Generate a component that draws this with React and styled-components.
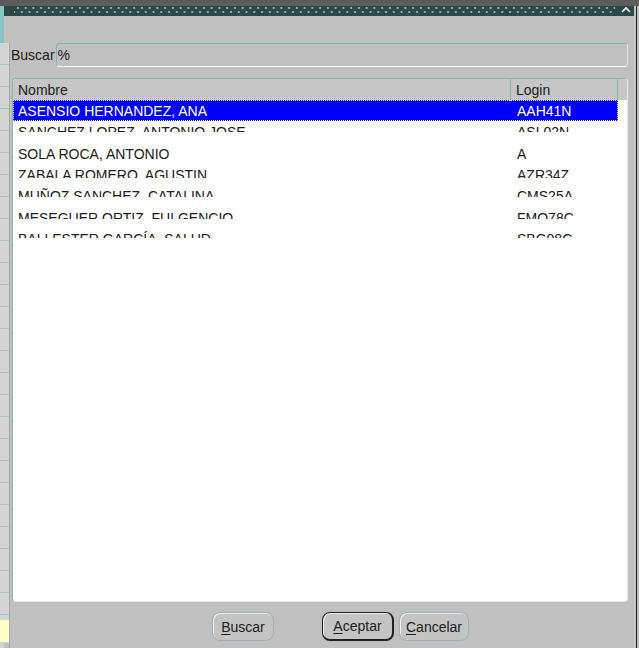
import React from "react";
import styled, { createGlobalStyle } from "styled-components";

const GlobalStyle = createGlobalStyle`
  html, body {
    margin: 0;
    padding: 0;
  }
  body {
    background: #5c5c5c;
    font-family: "Liberation Sans", Arial, sans-serif;
  }
`;

const teal = "#80b8b8";

const Desktop = styled.div`
  width: 639px;
  height: 648px;
  overflow: hidden;
  display: grid;
  grid-template-columns: 4px 630px 5px;
  grid-template-rows: 6px 10px 632px;
  background: #c0c0c0;
`;

const TopBand = styled.div`
  grid-column: 1 / 4;
  grid-row: 1;
  background: #5c5c5c;
`;

const Side = styled.div`
  grid-column: 1;
  grid-row: 2 / 4;
  background:
    linear-gradient(#ffffc8, #ffffc8) 0 614px / 100% 22px no-repeat,
    linear-gradient(#88c4c4, #88c4c4) 0 0 / 100% 37px no-repeat,
    repeating-linear-gradient(to bottom, #d4d4d4 0 21px, #a0c8c8 21px 22px) 0 37px / 100% 600px no-repeat,
    #d4d4d4;
`;

const TitleBar = styled.div`
  grid-column: 2;
  grid-row: 2;
  display: flex;
  align-items: center;
  background: #2d4848;
  padding-right: 3px;
`;

const Dots = styled.div`
  flex: 1;
  align-self: stretch;
  margin-left: 10px;
  margin-right: 6px;
  background:
    radial-gradient(circle at 4px 1.8px, #7ab4b4 0 0.9px, transparent 1.3px) 0 0 / 7.75px 4px repeat-x,
    radial-gradient(circle at 4px 1.8px, #7ab4b4 0 0.9px, transparent 1.3px) 3.9px 4px / 7.75px 4px repeat-x;
`;

const Chevron = styled.svg`
  display: block;
  width: 10px;
  height: 8px;
  margin-top: -2px;
`;

const RightEdge = styled.div`
  grid-column: 3;
  grid-row: 2 / 4;
  background: linear-gradient(to right, #c8c8c8 0 1px, #c0c0c0 1px 2px, #202020 2px 3px, #c0c0c0 3px);
`;

const Body = styled.div`
  grid-column: 2;
  grid-row: 3;
  min-width: 0;
  display: flex;
  flex-direction: column;
  padding: 27px 6px 0 7px;
  background:
    linear-gradient(#ffffc8, #ffffc8) 0 604px / 5px 22px no-repeat,
    linear-gradient(#a8a8a8, #a8a8a8) 5px 27px / 1px 100% no-repeat,
    repeating-linear-gradient(to bottom, #d4d4d4 0 21px, #a0c8c8 21px 22px) 0 27px / 5px 600px no-repeat,
    #c0c0c0;
`;

const SearchRow = styled.div`
  display: flex;
  align-items: center;
  height: 24px;
`;

const Label = styled.label`
  font-size: 14px;
  color: #202020;
  margin-right: 1px;
`;

const Field = styled.div`
  flex: 1;
  box-sizing: border-box;
  height: 24px;
  border: 1px solid ${teal};
  border-right-color: #e4e4e4;
  border-bottom-color: #ffffff;
  border-radius: 4px;
  font-size: 14px;
  line-height: 22px;
  padding-left: 1px;
  color: #202020;
`;

const ListBox = styled.div`
  margin-top: 11px;
  margin-left: 1px;
  height: 524px;
  box-sizing: border-box;
  border: 1px solid ${teal};
  border-right-color: #e8e8e8;
  border-bottom-color: #e8e8e8;
  border-radius: 4px;
  background: #ffffff;
  overflow: hidden;
`;

const Header = styled.div`
  display: grid;
  grid-template-columns: 498px 107px 1fr;
  height: 21px;
  background: #c6c6c6;
`;

const HeadCell = styled.div`
  font-size: 14px;
  line-height: 21px;
  padding-top: 1px;
  color: #202020;
  padding-left: 5px;
  border-right: 1px solid ${teal};
  &:last-child {
    border-right: none;
  }
`;

const Row = styled.div`
  display: grid;
  grid-template-columns: 498px 107px;
  width: 605px;
  height: 21.33px;
  box-sizing: border-box;
  background: ${({ $selected }) => ($selected ? "#0000ff" : "transparent")};
  color: ${({ $selected }) => ($selected ? "#ffffff" : "#202020")};
  outline: ${({ $selected }) => ($selected ? "1px dotted #ffffff" : "none")};
  outline-offset: -1px;
`;

const Cell = styled.div`
  padding-left: ${({ $pad }) => $pad}px;
  font-size: 14px;
  line-height: 21px;
  white-space: nowrap;
`;

const Clip = styled.span`
  display: block;
  padding-top: 1px;
  height: ${({ $clip }) => $clip}px;
  overflow: hidden;
`;

const Footer = styled.div`
  display: flex;
  align-items: center;
  margin-top: 10px;
  padding-left: 201px;
`;

const Button = styled.button`
  height: 29px;
  box-sizing: border-box;
  padding: 0;
  width: ${({ $w }) => $w}px;
  margin-left: ${({ $gap }) => $gap}px;
  font-family: "Liberation Sans", Arial, sans-serif;
  font-size: 14px;
  color: #202020;
  background: #c4c4c4;
  border: 1px solid ${({ $default }) => ($default ? "#202020" : "#98b4b4")};
  border-right-width: ${({ $default }) => ($default ? 2 : 1)}px;
  border-bottom-width: ${({ $default }) => ($default ? 2 : 1)}px;
  border-radius: 8px;
  box-shadow: inset 1px 1px 0 #eeeeee;
  u {
    text-decoration-thickness: 1px;
    text-underline-offset: 2px;
  }
`;

const people = [
  { name: "ASENSIO HERNANDEZ, ANA", login: "AAH41N", clip: 20 },
  { name: "SANCHEZ LOPEZ, ANTONIO JOSE", login: "ASL02N", clip: 10 },
  { name: "SOLA ROCA, ANTONIO", login: "A", clip: 20 },
  { name: "ZABALA ROMERO, AGUSTIN", login: "AZR34Z", clip: 13 },
  { name: "MUÑOZ SANCHEZ, CATALINA", login: "CMS25A", clip: 11 },
  { name: "MESEGUER ORTIZ, FULGENCIO", login: "FMO78C", clip: 11 },
  { name: "BALLESTER GARCÍA, SALUD", login: "SBG08C", clip: 9 },
];

const App = () => {
  return (
    <>
      <GlobalStyle />
      <Desktop>
        <TopBand />
        <Side />
        <TitleBar>
          <Dots />
          <Chevron viewBox="0 0 10 8">
            <polyline points="1,6 5,2 9,6" fill="none" stroke="#ffffff" strokeWidth="1.6" />
          </Chevron>
        </TitleBar>
        <RightEdge />
        <Body>
          <SearchRow>
            <Label>Buscar</Label>
            <Field>%</Field>
          </SearchRow>
          <ListBox>
            <Header>
              <HeadCell>Nombre</HeadCell>
              <HeadCell>Login</HeadCell>
              <HeadCell />
            </Header>
            {people.map((p, i) => (
              <Row key={p.name} $selected={i === 0}>
                <Cell $pad={5}>
                  <Clip $clip={p.clip}>{p.name}</Clip>
                </Cell>
                <Cell $pad={6}>
                  <Clip $clip={p.clip}>{p.login}</Clip>
                </Cell>
              </Row>
            ))}
          </ListBox>
          <Footer>
            <Button $w={62} $gap={0}>
              <u>B</u>uscar
            </Button>
            <Button $w={72} $gap={48} $default>
              <u>A</u>ceptar
            </Button>
            <Button $w={70} $gap={5}>
              <u>C</u>ancelar
            </Button>
          </Footer>
        </Body>
      </Desktop>
    </>
  );
};

export default App;
